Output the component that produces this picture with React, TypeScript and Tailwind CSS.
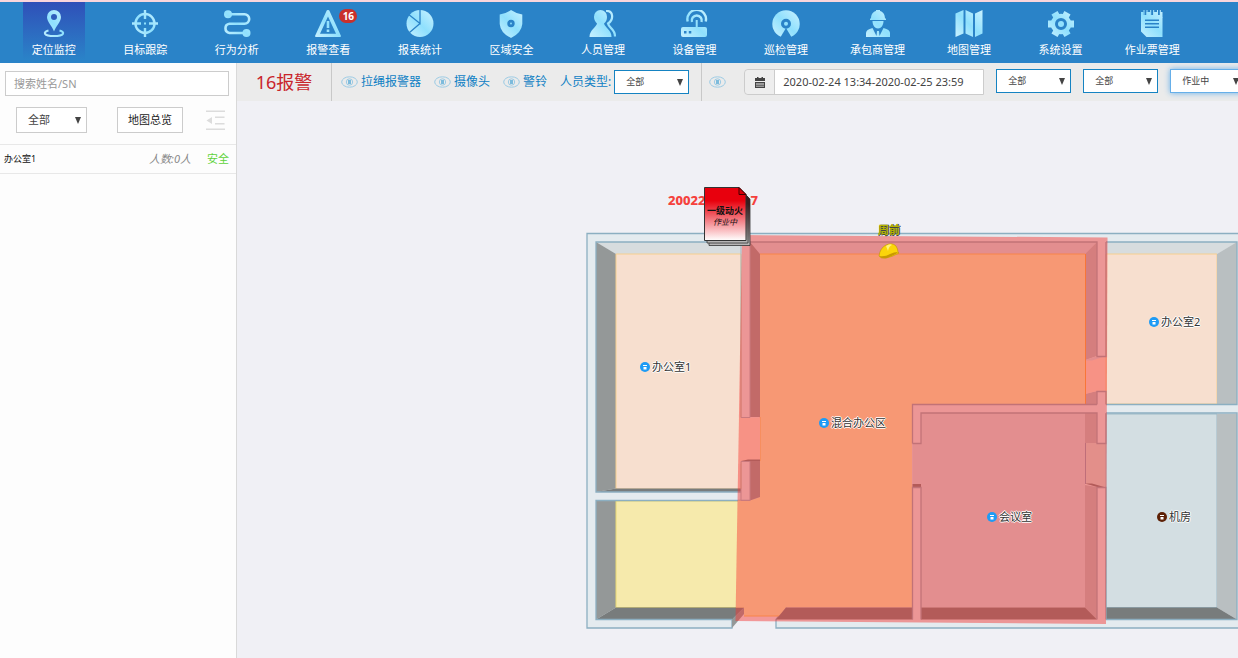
import React from "react";

const BLUE = "#2a83c8";

const navItems = [
  {
    name: "定位监控",
    icon: (
      <>
        <path
          fillRule="evenodd"
          d="M14 0a7 7 0 0 0-7 7c0 5 5 9 7 14.500c2-5.500 7-9.500 7-14.500a7 7 0 0 0-7-7zm0 4a3 3 0 1 1 0 6a3 3 0 0 1 0-6z"
        />
        <path
          d="M8.500 20.500C2.500 22 3.500 26 14 26s11.500-4 5.500-5.500"
          fill="none"
          stroke="url(#ice)"
          strokeWidth="2"
        />
      </>
    ),
  },
  {
    name: "目标跟踪",
    icon: (
      <>
        <circle cx="14" cy="13.5" r="9.500" fill="none" stroke="url(#ice)" strokeWidth="2.400" />
        <path d="M12.800 0h2.400v9h-2.400zM12.800 18h2.400v9h-2.400zM1 12.300h9v2.400h-9zM18 12.300h9v2.400h-9zM13 12.500h2v2h-2z" />
      </>
    ),
  },
  {
    name: "行为分析",
    icon: (
      <>
        <circle cx="5" cy="4.300" r="4" />
        <circle cx="23.500" cy="23" r="4" />
        <path
          d="M6 4.300H21.500a4.700 4.700 0 0 1 0 9.400H6.500a4.700 4.700 0 0 0 0 9.300H22"
          fill="none"
          stroke="url(#ice)"
          strokeWidth="2.600"
        />
      </>
    ),
  },
  {
    name: "报警查看",
    badge: "16",
    icon: (
      <>
        <path
          fillRule="evenodd"
          d="M12.700 0.500Q14 -0.600 15.300 0.500L27 26Q27 27 26 27H2Q1 27 1 26ZM14 6.500L6 23.800H22Z"
        />
        <path d="M12.700 11h2.600v7h-2.600zM12.700 19.500h2.600v2.500h-2.600z" />
      </>
    ),
  },
  {
    name: "报表统计",
    icon: (
      <>
        <circle cx="14" cy="13.5" r="13.500" />
        <path d="M14 0V13.500L3 4.800M14 13.500L3.500 22.500" fill="none" stroke={BLUE} strokeWidth="1.300" />
      </>
    ),
  },
  {
    name: "区域安全",
    icon: (
      <>
        <path d="M14 0Q19 3.500 25.300 4.500V14Q24.500 23 14 28Q3.500 23 2.700 14V4.500Q9 3.500 14 0Z" />
        <circle cx="14" cy="13.500" r="2.300" fill="none" stroke={BLUE} strokeWidth="2.800" />
      </>
    ),
  },
  {
    name: "人员管理",
    icon: (
      <>
        <path d="M11.500 0a6.500 6.700 0 0 0-6.500 7c0 3 1.500 5 3 6.500C7.500 17 0.500 20 0.500 27H22.500C22.500 20 16 17.500 15 13.500C17 12 18 10 18 7A6.500 6.700 0 0 0 11.500 0Z" />
        <path
          d="M17 1C24.500 0.500 25 9.500 19 13.500C20 18.500 26 18.500 26 26.500"
          fill="none"
          stroke="url(#ice)"
          strokeWidth="2.200"
        />
      </>
    ),
  },
  {
    name: "设备管理",
    icon: (
      <>
        <path
          fillRule="evenodd"
          d="M3 17H15.700V10H17.700V17H25Q27 17 27 19V25Q27 27 25 27H3Q1 27 1 25V19Q1 17 3 17ZM4 21v2.500h2.500V21zM8.800 21v2.500h2.500V21z"
        />
        <g fill="none" stroke="url(#ice)" strokeWidth="2.400">
          <path d="M7.700 11.500a9.300 9.300 0 1 1 18 0" />
          <path d="M12 12a5 5 0 1 1 9.500 0" />
        </g>
      </>
    ),
  },
  {
    name: "巡检管理",
    icon: (
      <>
        <circle cx="14" cy="14" r="13.700" />
        <path d="M14 18L8 28H20Z" fill={BLUE} />
        <circle cx="14" cy="13.700" r="3.500" fill="none" stroke={BLUE} strokeWidth="3" />
      </>
    ),
  },
  {
    name: "承包商管理",
    icon: (
      <>
        <path d="M7 8.500C7 4 9.500 1.500 12 1V0H16V1C18.500 1.500 21 4 21 8.500H22V10H6V8.500Z" />
        <path d="M8.500 11H19.500C19.500 15.500 17 18.500 14 18.500S8.500 15.500 8.500 11Z" />
        <path d="M8.500 18L12.500 26L13 21H15L15.500 26L19.500 18Q26 19.500 26 23V27H2V23Q2 19.500 8.500 18Z" />
      </>
    ),
  },
  {
    name: "地图管理",
    icon: (
      <path d="M0.500 3.500L8.500 0V23.500L0.500 27ZM10.500 0L18 3.500V27L10.500 23.500ZM20 3.500L27.500 0V23.500L20 27Z" />
    ),
  },
  {
    name: "系统设置",
    icon: (
      <>
        <circle cx="14" cy="14" r="10.300" />
        <g stroke="url(#ice)" strokeWidth="7" strokeLinejoin="round">
          <path d="M1 14L27 14.100" />
          <path d="M7.500 2.700L20.500 25.300" />
          <path d="M20.500 2.700L7.500 25.300" />
        </g>
        <circle cx="14" cy="14" r="4.500" fill="none" stroke={BLUE} strokeWidth="3" />
      </>
    ),
  },
  {
    name: "作业票管理",
    icon: (
      <>
        <path
          fillRule="evenodd"
          d="M3 7.500H24.500V27H8.500L3 21.500ZM7 9.500v1.400h14V9.500zM7 13v1.400h14V13zM7 16.500v1.400h14v-1.400z"
        />
        <path d="M3 2H5.500V5H8.500V2H12.500V5H15.500V2H19.500V5H22V2H24.500V8H3Z" />
        <path d="M6 0v5M9 0v5M12.700 0v5M15.700 0v5M19.500 0v5M22.300 0v5" stroke="url(#ice)" strokeWidth="1" />
      </>
    ),
  },
];

const rooms = [
  { name: "办公室1", color: "#1e9bf5", pos: "left-[403px] top-[258px]" },
  { name: "办公室2", color: "#1e9bf5", pos: "left-[912px] top-[213px]" },
  { name: "混合办公区", color: "#1e9bf5", pos: "left-[582px] top-[314px]" },
  { name: "会议室", color: "#1e9bf5", pos: "left-[750px] top-[408px]" },
  { name: "机房", color: "#5d2106", pos: "left-[920px] top-[408px]" },
];

function EyeIcon() {
  return (
    <svg width="17" height="12" viewBox="0 0 17 12" className="shrink-0" fill="none" stroke="#9ccbe4">
      <ellipse cx="8.500" cy="6" rx="7.800" ry="5.200" />
      <circle cx="8.500" cy="6" r="3.200" />
      <rect x="7" y="4" width="3" height="4" fill="#7dbbdc" stroke="none" />
    </svg>
  );
}

function Toggle({ name }: { name: string }) {
  return (
    <button type="button" className="flex items-center gap-[3px] text-xs leading-4 text-[#0f80c4]">
      <EyeIcon />
      {name}
    </button>
  );
}

function Select({ id, label, value, box }: { id: string; label: string; value: string; box: string }) {
  return (
    <div className="relative shrink-0">
      <select
        id={id}
        aria-label={label}
        className={`block appearance-none border bg-white text-[#444] outline-none ${box}`}
      >
        <option>{value}</option>
      </select>
      <svg
        width="6"
        height="7"
        viewBox="0 0 6 7"
        className="pointer-events-none absolute right-[6px] top-1/2 -mt-[3px]"
        fill="#444"
      >
        <path d="M0 0H6L3 7Z" />
      </svg>
    </div>
  );
}

function Header() {
  return (
    <header className="border-t-2 border-[#f9d5dc] bg-[#2a83c8]">
      <svg width="0" height="0" className="absolute">
        <defs>
          <linearGradient id="ice" x1="0" y1="27" x2="27" y2="0" gradientUnits="userSpaceOnUse">
            <stop offset="0" stopColor="#c9f1ff" />
            <stop offset="0.5" stopColor="#8fe0fd" />
            <stop offset="1" stopColor="#c9f1ff" />
          </linearGradient>
        </defs>
      </svg>
      <nav className="flex pb-[3px] pl-2 pr-10">
        {navItems.map((item, i) => (
          <a key={item.name} href="#" className="flex flex-1 justify-center text-[11px] leading-4 text-white">
            <span
              className={`relative flex h-[58px] w-[62px] flex-col items-center pt-2 ${
                i === 0 ? "bg-linear-to-b from-[#2f4fb8] to-[#2a83c8]" : ""
              }`}
            >
              <svg width="28" height="28" viewBox="0 0 28 28" fill="url(#ice)">
                {item.icon}
              </svg>
              <span className="mt-1 whitespace-nowrap">{item.name}</span>
              {item.badge && (
                <span className="absolute left-[42px] top-[7px] w-[18px] rounded-full bg-[#c9302c] text-center text-[10px] font-bold leading-[14px]">
                  {item.badge}
                </span>
              )}
            </span>
          </a>
        ))}
      </nav>
    </header>
  );
}

function Sidebar() {
  return (
    <aside className="w-[237px] shrink-0 border-r border-[#d9d9d9] bg-[#fdfdfd] text-[11px]">
      <div className="px-[5px] pt-2 pr-[7px]">
        <input
          type="text"
          aria-label="搜索姓名/SN"
          placeholder="搜索姓名/SN"
          className="block h-[25px] w-full border border-[#ccc] bg-white px-2 placeholder:text-[#999]"
        />
      </div>
      <div className="flex items-center border-b border-[#e8e8e8] pb-[11px] pl-4 pr-[11px] pt-[11px]">
        <Select
          id="area"
          label="区域"
          value="全部"
          box="h-[26px] w-[71px] border-[#ccc] pl-[11px] text-[11px]"
        />
        <button type="button" className="ml-[30px] h-[26px] w-[66px] border border-[#ccc] bg-white text-[#222]">
          地图总览
        </button>
        <button type="button" aria-label="收起" className="ml-auto">
          <svg width="19" height="21" viewBox="0 0 19 21" fill="#dcdcdc">
            <path d="M0 0.500H19V2H0ZM0 18.500H19V20H0ZM9 6.500H18.500V8H9ZM9 13H18.500V14.500H9ZM0.500 10.500L6 7V14Z" />
          </svg>
        </button>
      </div>
      <div className="flex items-center border-b border-[#e8e8e8] py-1.5 pl-1 pr-[7px] leading-4">
        <span className="text-[9px] text-[#111]">办公室1</span>
        <em className="ml-auto text-[#888]">人数:0人</em>
        <span className="ml-4 text-[#5fd33c]">安全</span>
      </div>
    </aside>
  );
}

function Toolbar() {
  return (
    <div className="flex h-[38px] items-center overflow-hidden bg-[#ebebeb]">
      <div className="flex h-full w-[95px] shrink-0 items-center justify-center border-r border-[#c8c8c8] text-lg text-[#c9252b]">
        16报警
      </div>
      <div className="flex h-full shrink-0 items-center gap-[13px] border-r border-[#c8c8c8] pl-[9px] pr-3">
        <Toggle name="拉绳报警器" />
        <Toggle name="摄像头" />
        <Toggle name="警铃" />
        <div className="flex items-center gap-[3px]">
          <label htmlFor="person" className="text-xs text-[#0f80c4]">
            人员类型:
          </label>
          <Select
            id="person"
            label="人员类型"
            value="全部"
            box="h-6 w-[75px] border-[#1583c2] pl-[11px] text-[9px]"
          />
        </div>
      </div>
      <button type="button" aria-label="作业票" className="ml-[7px] shrink-0">
        <EyeIcon />
      </button>
      <div className="ml-[18px] flex h-[26px] w-60 shrink-0 rounded-l border border-[#ccc]">
        <span className="flex w-[30px] items-center justify-center rounded-l border-r border-[#ccc] bg-[#eee]">
          <svg width="10" height="11" viewBox="0 0 10 11" fill="#444">
            <path
              fillRule="evenodd"
              d="M0 1H2V0H3.500V1H6.500V0H8V1H10V4H0ZM0 5H10V11H0ZM1 6.500v1h8v-1zM1 8.700v.8h8v-.8z"
            />
          </svg>
        </span>
        <input
          type="text"
          aria-label="时间"
          defaultValue="2020-02-24 13:34-2020-02-25 23:59"
          className="min-w-0 flex-1 bg-white px-2 text-[11px] text-[#444]"
        />
      </div>
      <div className="ml-3 flex gap-3 pb-0.5">
        <Select id="level" label="级别" value="全部" box="h-6 w-[75px] border-[#1583c2] pl-[11px] text-[9px]" />
        <Select id="type" label="类型" value="全部" box="h-6 w-[75px] border-[#1583c2] pl-[11px] text-[9px]" />
        <Select
          id="state"
          label="状态"
          value="作业中"
          box="h-6 w-[75px] border-[#66afe9] pl-[11px] text-[9px] shadow-[0_0_6px_#66afe9]"
        />
      </div>
    </div>
  );
}

function FloorPlan() {
  return (
    <svg width="1001" height="557" viewBox="237 101 1001 557" className="absolute left-0 top-0">
      {/* wall slab */}
      <path
        d="M587 233.500H1245V628H776V619.500L786 607H744L732 619.500V628H587Z"
        fill="#e4ebef"
        stroke="#8cafc1"
        strokeWidth="1.300"
      />

      {/* office 1 */}
      <path d="M596 242H741V254H616Z" fill="#d7dcde" />
      <path d="M596 242L616 254V488.500L596 492Z" fill="#949898" />
      <path d="M616 254H741V489H616Z" fill="#f7dfcf" stroke="#f5cf90" />
      <path d="M596 492L616 488.500H741V492Z" fill="#787c7c" />
      <path d="M741 242H596V492H741" fill="none" stroke="#8cafc1" strokeWidth="1.300" />

      {/* lower left room */}
      <path d="M596 501L616 501V607.500L596 619.500Z" fill="#949898" />
      <path d="M616 501H744V607.500H616Z" fill="#f6eaac" stroke="#e8d873" />
      <path d="M616 607.500H744L732 619.500H596Z" fill="#787c7c" />
      <path d="M744 607.500V614L732 628V619.500Z" fill="#949898" />
      <path d="M750 500.500H596V619.500H732" fill="none" stroke="#8cafc1" strokeWidth="1.300" />

      {/* open office */}
      <path d="M750 242H1097L1085 254H760Z" fill="#d3dde2" />
      <path d="M760 254H1085V404H912V607.500H786L780 616H744V607.500H736L738 500.500H750L760 497Z" fill="#f9efae" />
      <path d="M760 254H1085M760 417V461M744 616H780" fill="none" stroke="#fcc95c" />
      <path d="M750 242L760 254V417H750ZM750 461L760 459V497L750 500.500Z" fill="#949898" />
      <path d="M738 417.500H760V460L741 461V464H738Z" fill="#f9e4d0" />
      <path d="M741 461L748 459.500H760V461Z" fill="#787c7c" />
      <path d="M741 242H750V417.500H741ZM741 461.500H750V500.500H741Z" fill="none" stroke="#a3b5c0" />
      <path d="M1097 242L1085 254V360L1097 356ZM1085 394L1097 391V404H1085Z" fill="#b9bfc1" />
      <path d="M1085 361L1097 356H1107V391H1097L1085 394Z" fill="#f9e4d0" />
      <path d="M1085 360.500L1097 356H1106L1092 360.500Z" fill="#d3dde2" />
      <path d="M1085.500 254V404" stroke="#fcae3c" fill="none" />
      <path d="M786 607.500H912.500V619.500H776Z" fill="#787c7c" />

      {/* meeting room */}
      <path d="M921 413H1085V607.500H921ZM912.500 443.500H921V484H912.500Z" fill="#d3dde2" />
      <path d="M1085 413H1097V443H1085ZM1085 485L1097 487V619.500L1085 607.500Z" fill="#b9bfc1" />
      <path d="M1085 443H1107V487L1085 484Z" fill="#d3dfd9" />
      <path d="M1085 483.500H1092L1106 487.500H1099ZM912.500 484H921V487.500H912.500Z" fill="#787c7c" />
      <path d="M921 607.500H1085L1097 619.500H921Z" fill="#787c7c" />
      <path d="M1085.500 443V484" stroke="#8f9fb8" />

      {/* office 2 */}
      <path d="M1106 242H1237L1217 254H1106Z" fill="#d7dcde" />
      <path d="M1106 254H1217V404H1106Z" fill="#f7dfcf" stroke="#f5cf90" />
      <path d="M1217 254L1237 242V404H1217Z" fill="#b9bfc1" />
      <path d="M1106 242H1237V404.500H1106" fill="none" stroke="#8cafc1" strokeWidth="1.300" />

      {/* server room */}
      <path d="M1106 414H1217V607.500H1106Z" fill="#d3dee2" stroke="#9db9c6" />
      <path d="M1217 414H1237V619.500L1217 607.500Z" fill="#b9bfc1" />
      <path d="M1106 607.500H1217L1237 619.500H1106Z" fill="#787c7c" />
      <path d="M1106 413H1237V619.500H1106" fill="none" stroke="#8cafc1" strokeWidth="1.300" />

      <g fill="none" stroke="#94a8b4" strokeWidth="1.300">
        <path d="M750 242H1097V356.500H1106V242" />
        <path d="M1097 404.500V391.500H1106V404.500M912.500 443.500V404.500H1097" />
        <path d="M912.500 443.500H921V413H1097V443.500H1106V413" />
        <path d="M912.500 619.500V487.500H921V619.500M1097 619.500V487.500H1106V619.500" />
      </g>

      {/* alarm zone */}
      <path d="M742 235L1107.500 237.500L1106 624L735.500 621Z" fill="#f53935" fillOpacity="0.480" />
    </svg>
  );
}

function MapView() {
  return (
    <div className="relative flex-1 overflow-hidden bg-[#f0f0f5]">
      <FloorPlan />
      {rooms.map((room) => (
        <div
          key={room.name}
          className={`absolute flex items-center gap-0.5 whitespace-nowrap text-[11px] leading-4 text-[#333] [text-shadow:1px_0_#fff,-1px_0_#fff,0_1px_#fff,0_-1px_#fff] ${room.pos}`}
        >
          <svg width="10" height="10" viewBox="0 0 10 10">
            <circle cx="5" cy="5" r="5" fill={room.color} />
            <path d="M3 3H7V4H3ZM3.500 5H6.500V7.500H3.500Z" fill="#fff" />
          </svg>
          {room.name}
        </div>
      ))}

      <div className="absolute left-[431px] top-[91px] flex w-[90px] justify-between text-[13px] font-extrabold leading-4 text-[#f5413c]">
        <span>20022</span>
        <span>7</span>
      </div>
      <div className="absolute left-[467px] top-[85px] h-[61px] w-12">
        <svg width="48" height="61" viewBox="0 0 48 61" className="absolute">
          <defs>
            <linearGradient id="permit" x1="0" y1="0" x2="0" y2="1">
              <stop offset="0.250" stopColor="#e8000d" />
              <stop offset="1" stopColor="#fff" />
            </linearGradient>
            <linearGradient id="pages" x1="0" y1="0" x2="0" y2="1">
              <stop offset="0.250" stopColor="#3a1214" />
              <stop offset="1" stopColor="#bbb" />
            </linearGradient>
          </defs>
          <path d="M5 8V59.500H46V13L38 5Z" fill="url(#pages)" stroke="#333" strokeWidth="0.800" />
          <path d="M3 6V57H44V11L36 4Z" fill="url(#pages)" stroke="#333" strokeWidth="0.800" />
          <path d="M0.500 1.500H35L42 8.500V54.500H0.500Z" fill="url(#permit)" stroke="#333" />
          <path d="M35 1.500V8.500H42Z" fill="#d5000a" stroke="#400" />
        </svg>
        <div className="relative w-[42px] pt-[19px] text-center text-[#111]">
          <div className="text-[9px] font-bold leading-3">一级动火</div>
          <div className="text-[8px] italic leading-[10px]">作业中</div>
        </div>
      </div>

      <div className="absolute left-[640px] top-[121px] flex w-6 flex-col items-center text-[11px] font-bold leading-4 text-[#b4b400] [text-shadow:1px_0_#444,0_1px_#444]">
        周前
        <svg width="22" height="17" viewBox="0 0 22 17" className="mt-1">
          <path d="M1 14Q2 6 8 3Q14 0 18 4Q20 7 20 10L21 11Q14 15 8 16Q3 17 1 14Z" fill="#fbd50a" stroke="#b08c00" strokeWidth="0.500" />
          <path d="M1 14Q7 15 12 12Q16 10 20 10Q19 12 9 16Q3 17 1 14Z" fill="#c99a00" />
          <path d="M8 4Q12 1 14 3Q11 4 10 9" fill="#fff27a" />
        </svg>
      </div>
    </div>
  );
}

export default function App() {
  return (
    <div className="flex min-h-screen flex-col overflow-hidden font-['Noto_Sans','Noto_Sans_CJK_SC',sans-serif]">
      <Header />
      <div className="flex flex-1">
        <Sidebar />
        <main className="flex min-w-0 flex-1 flex-col">
          <Toolbar />
          <MapView />
        </main>
      </div>
    </div>
  );
}
